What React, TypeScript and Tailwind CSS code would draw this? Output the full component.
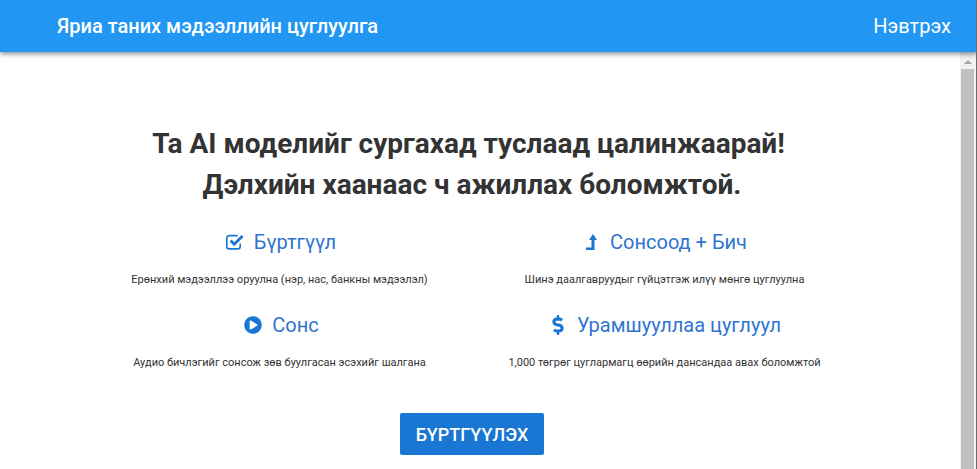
import { ReactNode } from "react";
import { FaDollarSign, FaPlayCircle } from "react-icons/fa";

function CheckIcon() {
  return (
    <svg width="18" height="16" viewBox="0 0 18 16" fill="none" stroke="currentColor" className="block">
      <path d="M14.2 9.5V12.5a2.4 2.4 0 0 1-2.4 2.4H3.2a2.4 2.4 0 0 1-2.4-2.4V4a2.4 2.4 0 0 1 2.4-2.4h8.6" strokeWidth="1.6" />
      <path d="M4.6 6.6L8.2 10.2L16.6 2" strokeWidth="2.8" />
    </svg>
  );
}

function LevelUpIcon() {
  return (
    <svg width="16" height="16" viewBox="0 0 16 16" fill="currentColor" className="block">
      <path d="M9 0L13 6H10.5V16H2V13.5H7.5V6H5Z" />
    </svg>
  );
}

function Feature({ icon, title, text, offset, gap }: { icon: ReactNode; title: string; text: string; offset: string; gap: string }) {
  return (
    <div className="flex flex-col items-center">
      <div className={`flex h-[30px] items-center text-[20px] text-[#2f74d0] ${offset} ${gap}`}>
        <span className="text-[#1976d2]">{icon}</span>
        <span>{title}</span>
      </div>
      <p className="mt-[15px] h-[16px] text-[11px] leading-[16px] text-[#333]">{text}</p>
    </div>
  );
}

export default function App() {
  return (
    <div className="relative h-[469px] w-[977px] overflow-hidden bg-white font-['Roboto',sans-serif]">
      {/* scrollbar */}
      <div className="absolute bottom-0 right-[1px] top-[52px] flex w-[16px] flex-col bg-[#f1f1f1] pl-[1px]">
        <div className="ml-[3px] mt-[8px] h-0 w-0 border-x-[4px] border-b-[4px] border-x-transparent border-b-[#a3a3a3]" />
        <div className="mt-[5px] h-[400px] w-[13px] bg-[#c1c1c1]" />
      </div>
      <div className="absolute bottom-0 right-0 top-0 z-20 w-px bg-[#6b6b6b]" />

      <header className="relative z-10 flex h-[52px] items-center justify-between bg-[#2196f3] pl-[57px] pr-[26px] text-[20px] text-white shadow-[0_2px_5px_rgba(0,0,0,0.45)]">
        <div className="font-medium">Яриа таних мэдээллийн цуглуулга</div>
        <div>Нэвтрэх</div>
      </header>

      <main className="flex w-[944px] flex-col items-center pt-[71px]">
        <h1 className="text-center text-[28px] font-bold leading-[41px] text-[#333]">
          Та AI моделийг сургахад туслаад цалинжаарай!&nbsp;
          <br />
          Дэлхийн хаанаас ч ажиллах боломжтой.
        </h1>
        <div className="mt-[22px] grid w-[770px] grid-cols-2 gap-y-[22px]">
          <Feature offset="pl-[3px]" gap="gap-[10px]" icon={<CheckIcon />} title="Бүртгүүл" text="Ерөнхий мэдээллээ оруулна (нэр, нас, банкны мэдээлэл)" />
          <Feature offset="pl-[2px]" gap="gap-[10px]" icon={<LevelUpIcon />} title="Сонсоод + Бич" text="Шинэ даалгавруудыг гүйцэтгэж илүү мөнгө цуглуулна" />
          <Feature offset="pl-[4px]" gap="gap-[10px]" icon={<FaPlayCircle size={18} />} title="Сонс" text="Аудио бичлэгийг сонсож зөв буулгасан эсэхийг шалгана" />
          <Feature offset="pl-0" gap="gap-[9px]" icon={<FaDollarSign size={20} />} title="Урамшууллаа цуглуул" text="1,000 төгрөг цуглармагц өөрийн дансандаа авах боломжтой" />
        </div>
        <button className="mt-[42px] h-[42px] w-[144px] rounded-[2px] bg-[#1976d2] text-[18px] font-medium text-white">БҮРТГҮҮЛЭХ</button>
      </main>
    </div>
  );
}
